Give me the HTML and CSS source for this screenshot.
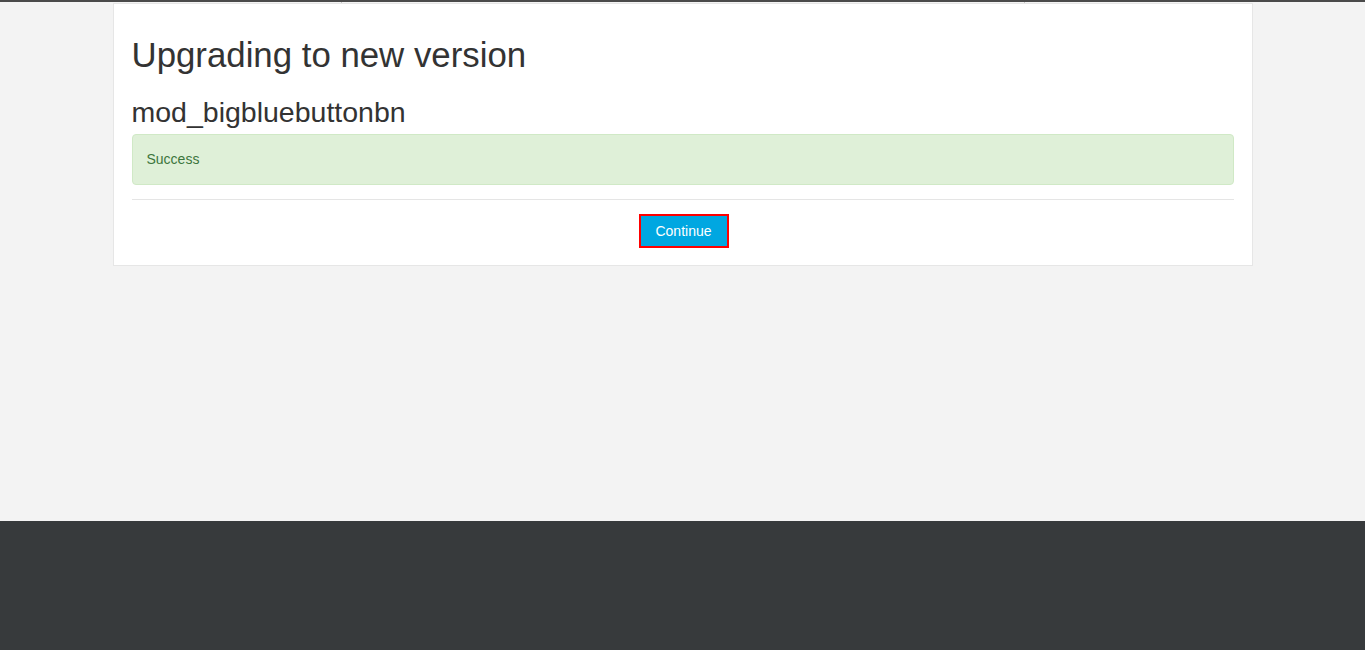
FILE: index.html
```html
<!DOCTYPE html>
<html lang="en">
<head>
<meta charset="utf-8">
<title>Upgrading to new version</title>
<link rel="stylesheet" href="styles.css">
</head>
<body>
<div class="page">
  <div class="topbar">
    <span class="tick tick-a"></span>
    <span class="tick tick-b"></span>
  </div>
  <div class="card">
    <h2 class="title">Upgrading to new version</h2>
    <h3 class="plugin">mod_bigbluebuttonbn</h3>
    <div class="alert">Success</div>
    <hr class="divider">
    <div class="actions">
      <button class="btn" type="button">Continue</button>
    </div>
  </div>
</div>
<footer class="footer"></footer>
</body>
</html>
```

FILE: styles.css
```css
* { box-sizing: border-box; }
html, body { margin: 0; padding: 0; }
body {
  background: #f3f3f3;
  font-family: "Liberation Sans", Arial, sans-serif;
  color: #333;
}
.page {
  min-height: 521px;
  display: flex;
  flex-direction: column;
  align-items: center;
}
.topbar {
  position: relative;
  width: 100%;
  height: 2px;
  background: #4a4a4a;
}
.tick {
  position: absolute;
  top: 2px;
  width: 1px;
  height: 1px;
  background: #c8c8c8;
}
.tick-a { left: 341px; }
.tick-b { left: 1024px; }
.card {
  width: 1140px;
  margin-top: 1px;
  background: #fff;
  border: 1px solid #e6e6e6;
  padding: 0 18px 17px;
}
.title {
  margin: 29px 0 0;
  font-size: 34.8px;
  font-weight: 400;
  line-height: 44px;
  color: #333;
}
.plugin {
  margin: 18px 0 0;
  font-size: 28.5px;
  font-weight: 400;
  line-height: 34px;
  color: #333;
}
.alert {
  margin-top: 5px;
  background: #dff0d8;
  border: 1px solid #d0e9c6;
  border-radius: 4px;
  padding: 14px 14px 15px;
  font-size: 14px;
  line-height: 20px;
  color: #3c763d;
}
.divider {
  margin: 14px 0 0;
  border: 0;
  border-top: 1px solid #e5e5e5;
}
.actions {
  display: flex;
  justify-content: center;
  padding-top: 14px;
  padding-left: 2px;
}
.btn {
  font-family: "Liberation Sans", Arial, sans-serif;
  font-size: 14px;
  line-height: 20px;
  color: #fff;
  background: #00a7e1;
  border: 2px solid #ff0000;
  border-radius: 0;
  padding: 5px 14px;
  width: 90px;
  height: 34px;
}
.footer {
  height: 129px;
  background: #373a3c;
}
```
